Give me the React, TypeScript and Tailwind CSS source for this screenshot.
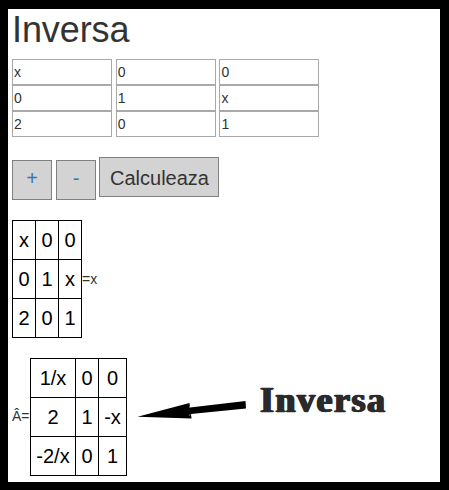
const inputs = ['x', '0', '0', '0', '1', 'x', '2', '0', '1'];
const source = ['x', '0', '0', '0', '1', 'x', '2', '0', '1'];
const inverse = ['1/x', '0', '0', '2', '1', '-x', '-2/x', '0', '1'];

function Matrix({ cells, columns }: { cells: string[]; columns: string }) {
  return (
    <div className={`grid shrink-0 auto-rows-[38px] gap-px bg-black p-px ${columns}`}>
      {cells.map((cell, i) => (
        <div
          key={i}
          className="flex items-center justify-center bg-white pb-px text-[20px] leading-none text-black"
        >
          {cell}
        </div>
      ))}
    </div>
  );
}

export default function App() {
  return (
    <div className="h-[490px] w-[449px] bg-black pt-[9px] pl-2 font-['Liberation_Sans',Arial,sans-serif] text-[#333]">
      <main className="flex h-[473px] w-[432px] flex-col bg-white pl-1">
        <h1 className="h-[50px] text-[36px] leading-[42px] tracking-[-0.1px]">Inversa</h1>
        <div className="grid grid-cols-[100px_100px_100px] auto-rows-[26px] gap-x-[3.7px]">
          {inputs.map((value, i) => (
            <input
              key={i}
              defaultValue={value}
              className="w-full border border-[#a9a9a9] bg-white px-px text-[14px] leading-5 outline-none"
            />
          ))}
        </div>
        <div className="mt-5 flex h-[43px]">
          <button className="mt-[3px] mr-1 size-10 border border-[#808080] bg-[#d3d3d3] pb-1 text-[20px] leading-none text-[#337ab7]">
            +
          </button>
          <button className="mt-[3px] mr-[3px] size-10 border border-[#808080] bg-[#d3d3d3] pb-1 text-[20px] leading-none text-[#337ab7]">
            -
          </button>
          <button className="h-10 w-[120px] border border-[#808080] bg-[#d3d3d3] pt-px pl-px text-[20px] leading-none">
            Calculeaza
          </button>
        </div>
        <div className="mt-5 flex items-center text-[14px] leading-5">
          <Matrix cells={source} columns="grid-cols-[22px_22px_22px]" />
          <span className="mb-px">=x</span>
        </div>
        <div className="mt-5 flex items-center text-[14px] leading-5">
          <span className="mb-0.5 w-[18px]">Â=</span>
          <Matrix cells={inverse} columns="grid-cols-[44px_22px_27px]" />
          <svg className="mb-3 ml-[9px] h-6 w-[112px]" viewBox="136 399 112 24" aria-hidden="true">
            <path d="M137.5 416.8 189.5 403 190 407.5 245.5 401 246 408.5 191 414 191.5 418.5Z" fill="#000" />
            <path d="M189 407h1M189 415h1" stroke="#aaa" />
          </svg>
          <span className="mb-[34px] ml-[12px] h-5 text-[36px] font-bold tracking-[1.5px] text-[#2b292a] font-['Liberation_Serif',serif] [-webkit-text-stroke:0.3px_#2b292a] [text-shadow:1px_0_#2b292a,-1px_0_#2b292a]">
            Inversa
          </span>
        </div>
      </main>
    </div>
  );
}
